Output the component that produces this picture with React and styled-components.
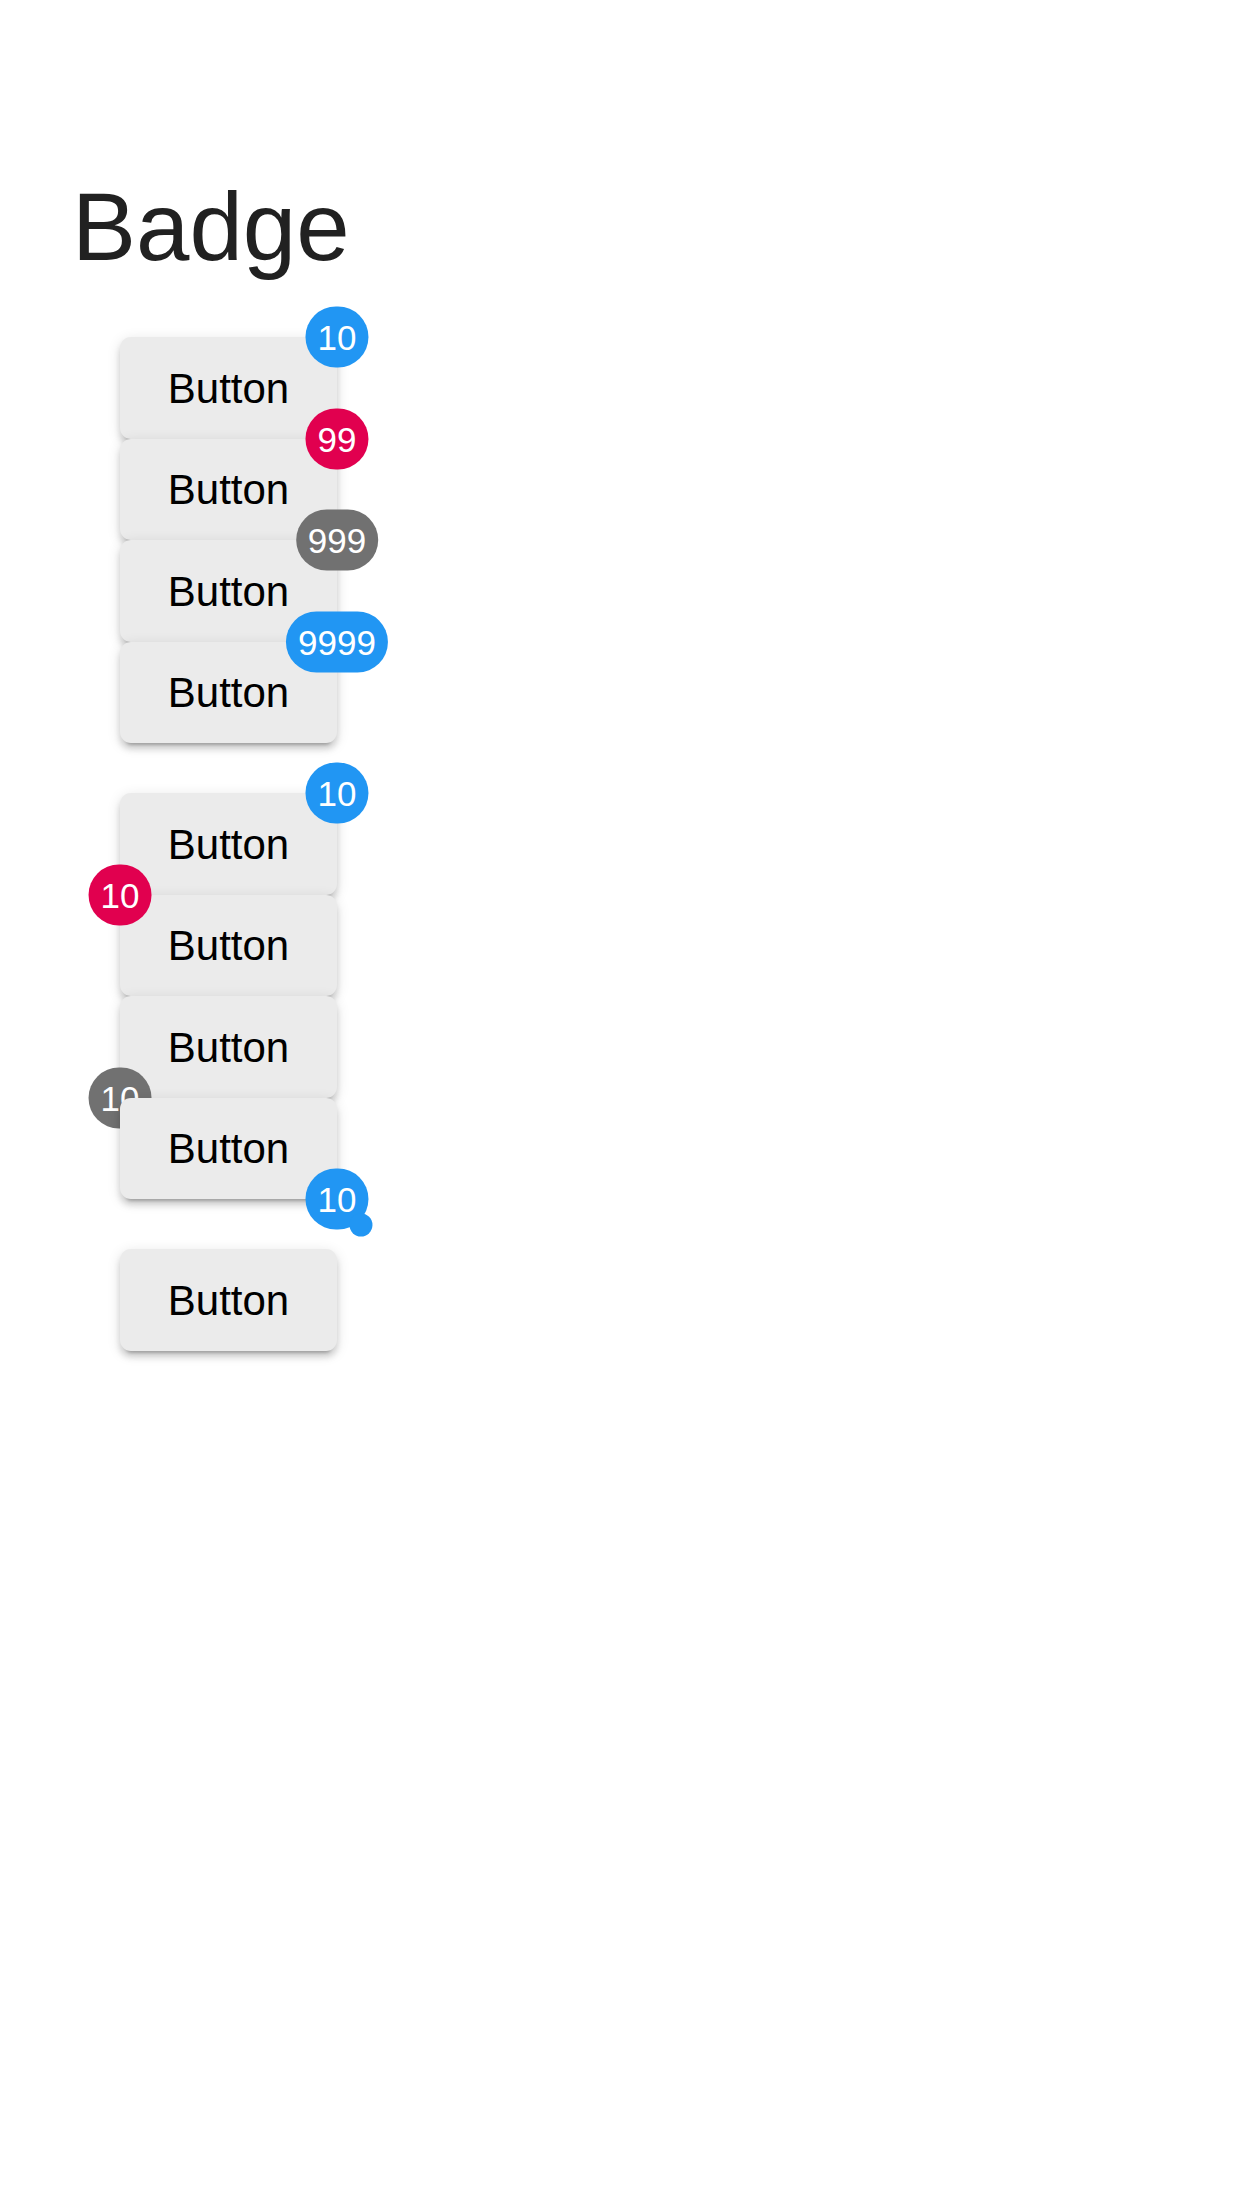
import styled, { createGlobalStyle } from 'styled-components'

const GlobalStyle = createGlobalStyle`
    html, body {
        margin: 0;
        padding: 0;
        background: #FFFFFF;
    }
    body {
        font-family: "Liberation Sans", Arial, sans-serif;
    }
`

const Page = styled.div`
    min-height: 2208px;
    padding: 179px 0 0 72px;
    box-sizing: border-box;
`

const Title = styled.h1`
    margin: 0;
    font-size: 96px;
    line-height: 1;
    font-weight: 400;
    color: #212121;
`

const Stack = styled.div`
    display: flex;
    flex-direction: column;
    gap: 50px;
    margin-top: 62px;
    padding-left: 48px;
`

const Group = styled.div`
    display: flex;
    flex-direction: column;
    align-items: flex-start;
`

const BadgeWrap = styled.span`
    position: relative;
    z-index: 0;
    display: inline-flex;
`

const Button = styled.button`
    width: 217px;
    height: 101.5px;
    padding: 2px 0 0;
    border: none;
    border-radius: 11px;
    background: #EBEBEB;
    color: #000000;
    font-family: "Liberation Sans", Arial, sans-serif;
    font-size: 42px;
    box-shadow: 0px 8px 3px -6px rgba(0, 0, 0, 0.2),
        0px 6px 6px 0px rgba(0, 0, 0, 0.14),
        0px 3px 14px 0px rgba(0, 0, 0, 0.12);
    cursor: pointer;
`

const colors = {
    primary: '#2196F3',
    secondary: '#E1004F',
    default: '#717171'
}

const corners = {
    topRight: 'top: 0; right: 0; transform: translate(50%, -50%);',
    topLeft: 'top: 0; left: 0; transform: translate(-50%, -50%);',
    bottomLeft: 'bottom: 0; left: 0; transform: translate(-50%, 50%);',
    bottomRight: 'bottom: 0; right: 0; transform: translate(50%, 50%);'
}

const Badge = styled.span`
    position: absolute;
    ${(p) => corners[p.$corner || 'topRight']}
    z-index: 1;
    display: inline-flex;
    align-items: center;
    justify-content: center;
    box-sizing: border-box;
    height: 61px;
    min-width: 61px;
    padding: 0 12px;
    border-radius: 31px;
    background: ${(p) => colors[p.$color || 'primary']};
    color: #FFFFFF;
    font-size: 35px;
    line-height: 1;
`

const Dot = styled.span`
    position: absolute;
    right: -4px;
    bottom: -6.5px;
    width: 23px;
    height: 23px;
    border-radius: 50%;
    background: #2196F3;
`

function BadgeButton({ content, color, corner, dot }) {
    return (
        <BadgeWrap>
            <Button>Button</Button>
            {content && (
                <Badge $color={color} $corner={corner}>
                    {content}
                    {dot && <Dot />}
                </Badge>
            )}
        </BadgeWrap>
    )
}

export default function App() {
    return (
        <Page>
            <GlobalStyle />
            <Title>Badge</Title>
            <Stack>
                <Group>
                    <BadgeButton content="10" color="primary" />
                    <BadgeButton content="99" color="secondary" />
                    <BadgeButton content="999" color="default" />
                    <BadgeButton content="9999" color="primary" />
                </Group>

                <Group>
                    <BadgeButton content="10" color="primary" corner="topRight" />
                    <BadgeButton content="10" color="secondary" corner="topLeft" />
                    <BadgeButton content="10" color="default" corner="bottomLeft" />
                    <BadgeButton content="10" color="primary" corner="bottomRight" dot />
                </Group>

                <Group>
                    <BadgeButton />
                </Group>
            </Stack>
        </Page>
    )
}
